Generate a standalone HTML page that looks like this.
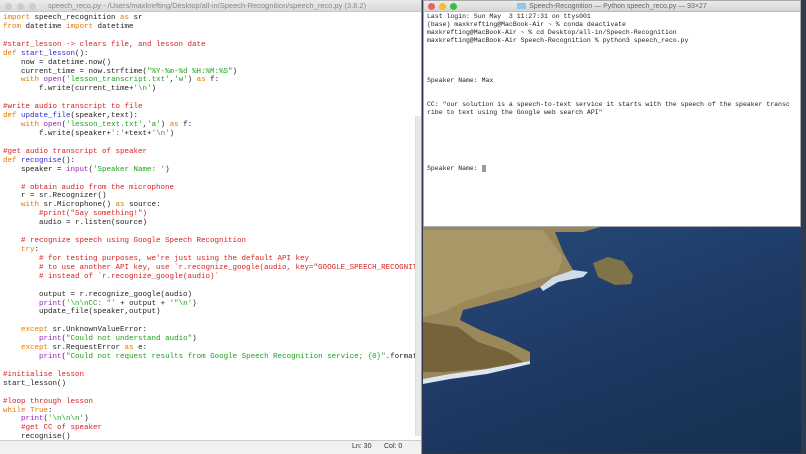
<!DOCTYPE html>
<html><head><meta charset="utf-8"><style>
*{margin:0;padding:0;box-sizing:border-box}
body{width:806px;height:454px;overflow:hidden;background:#2c3a4c;position:relative;font-family:"Liberation Mono",monospace}
#ed{position:absolute;left:0;top:0;width:422px;height:454px;background:#fff;border-right:1px solid #999}
#edt{height:12px;background:linear-gradient(#ececec,#d9d9d9);border-bottom:1px solid #c8c8c8;font-family:"Liberation Sans",sans-serif;font-size:7.5px;color:#888;line-height:12px;padding-left:48px;white-space:nowrap}
.dot{position:absolute;top:3px;width:7px;height:7px;border-radius:50%}
#code{position:absolute;left:3px;top:14px;font-size:7.5px;line-height:8.915px;white-space:pre;color:#222}
.k{color:#e07b00}.c{color:#d61f1f}.s{color:#1ba21b}.f{color:#2b2bd0}.b{color:#9a1fc0}
#sb{position:absolute;left:415px;top:116px;width:6px;height:320px;background:#e8e8e8;border-left:1px solid #ddd}
#st{position:absolute;left:0;top:440px;width:421px;height:14px;background:#f1f1f1;border-top:1px solid #ccc;font-family:"Liberation Sans",sans-serif;font-size:7px;color:#333;line-height:12px}
#term{position:absolute;left:423px;top:0;width:378px;height:227px;background:#fff;border:1px solid #aaa}
#tt{height:11px;background:linear-gradient(#ebebeb,#d6d6d6);border-bottom:1px solid #bbb;font-family:"Liberation Sans",sans-serif;font-size:7px;color:#666;text-align:center;line-height:11px}
#tx{position:absolute;left:3px;top:12px;font-size:6.5px;line-height:8px;white-space:pre;color:#222}
#wall{position:absolute;left:423px;top:227px;width:378px;height:226px;background:linear-gradient(160deg,#284b7c,#1d3862 55%,#16304f)}
</style></head><body>
<div id="ed">
<div id="edt">speech_reco.py - /Users/maxkrefting/Desktop/all-in/Speech-Recognition/speech_reco.py (3.8.2)</div>
<div class="dot" style="left:5px;background:#ccc"></div><div class="dot" style="left:17px;background:#ccc"></div><div class="dot" style="left:29px;background:#ccc"></div>
<div id="code"><span class="k">import</span> speech_recognition <span class="k">as</span> sr
<span class="k">from</span> datetime <span class="k">import</span> datetime

<span class="c">#start_lesson -&gt; clears file, and lesson date</span>
<span class="k">def</span> <span class="f">start_lesson</span>():
    now = datetime.now()
    current_time = now.strftime(<span class="s">"%Y-%m-%d %H:%M:%S"</span>)
    <span class="k">with</span> <span class="b">open</span>(<span class="s">'lesson_transcript.txt'</span>,<span class="s">'w'</span>) <span class="k">as</span> f:
        f.write(current_time+<span class="s">'\n'</span>)

<span class="c">#write audio transcript to file</span>
<span class="k">def</span> <span class="f">update_file</span>(speaker,text):
    <span class="k">with</span> <span class="b">open</span>(<span class="s">'lesson_text.txt'</span>,<span class="s">'a'</span>) <span class="k">as</span> f:
        f.write(speaker+<span class="s">':'</span>+text+<span class="s">'\n'</span>)

<span class="c">#get audio transcript of speaker</span>
<span class="k">def</span> <span class="f">recognise</span>():
    speaker = <span class="b">input</span>(<span class="s">'Speaker Name: '</span>)

    <span class="c"># obtain audio from the microphone</span>
    r = sr.Recognizer()
    <span class="k">with</span> sr.Microphone() <span class="k">as</span> source:
        <span class="c">#print("Say something!")</span>
        audio = r.listen(source)

    <span class="c"># recognize speech using Google Speech Recognition</span>
    <span class="k">try</span>:
        <span class="c"># for testing purposes, we're just using the default API key</span>
        <span class="c"># to use another API key, use `r.recognize_google(audio, key="GOOGLE_SPEECH_RECOGNIT</span>
        <span class="c"># instead of `r.recognize_google(audio)`</span>

        output = r.recognize_google(audio)
        <span class="b">print</span>(<span class="s">'\n\nCC: "'</span> + output + <span class="s">'"\n'</span>)
        update_file(speaker,output)

    <span class="k">except</span> sr.UnknownValueError:
        <span class="b">print</span>(<span class="s">"Could not understand audio"</span>)
    <span class="k">except</span> sr.RequestError <span class="k">as</span> e:
        <span class="b">print</span>(<span class="s">"Could not request results from Google Speech Recognition service; {0}"</span>.format

<span class="c">#initialise lesson</span>
start_lesson()

<span class="c">#loop through lesson</span>
<span class="k">while</span> <span class="k">True</span>:
    <span class="b">print</span>(<span class="s">'\n\n\n'</span>)
    <span class="c">#get CC of speaker</span>
    recognise()</div>
<div id="sb"></div>
<div id="st"><span style="position:absolute;left:352px">Ln: 30</span><span style="position:absolute;left:384px">Col: 0</span></div>
</div>
<div id="term">
<div id="tt"><span style="display:inline-block;width:9px;height:6px;background:#8ec5ea;margin-right:3px;vertical-align:-1px"></span>Speech-Recognition — Python speech_reco.py — 93×27</div>
<div class="dot" style="left:4px;top:2px;background:#f25d55"></div><div class="dot" style="left:15px;top:2px;background:#f6bd2f"></div><div class="dot" style="left:26px;top:2px;background:#2fc446"></div>
<div id="tx">Last login: Sun May  3 11:27:31 on ttys001
(base) maxkrefting@MacBook-Air ~ % conda deactivate
maxkrefting@MacBook-Air ~ % cd Desktop/all-in/Speech-Recognition
maxkrefting@MacBook-Air Speech-Recognition % python3 speech_reco.py




Speaker Name: Max


CC: "our solution is a speech-to-text service it starts with the speech of the speaker transc
ribe to text using the Google web search API"






Speaker Name: <span style="background:#999">&nbsp;</span></div>
</div>
<div id="wall">
<svg width="378" height="226" viewBox="0 0 378 226" style="position:absolute;left:0;top:0">
<path d="M0 0 L177 0 L160 5 L132 5 L140 25 L150 43 L130 50 L117 60 L90 70 L60 78 L40 83 L37 93 L57 103 L80 112 L107 125 L107 136 L85 142 L64 145 L27 150 L0 155 Z" fill="#9a875a"/>
<path d="M0 3 L120 3 L140 30 L135 45 L110 55 L70 65 L40 75 L20 85 L0 90 Z" fill="#b3a170" opacity=".6"/>
<path d="M0 95 L35 100 L55 115 L85 125 L100 135 L60 142 L20 145 L0 145 Z" fill="#6a5532" opacity=".75"/>
<path d="M0 152 L27 147 L64 142 L107 134 L107 137 L64 147 L27 152 L0 157 Z" fill="#dce6ee"/>
<path d="M117 60 L130 50 L150 43 L165 45 L160 50 L135 55 L120 64 Z" fill="#cfdbe5"/>
<path d="M170 36 L185 30 L200 34 L210 48 L208 57 L192 58 L175 50 Z" fill="#7f7448"/>
</svg>
</div>
<div style="position:absolute;left:801px;top:0;width:5px;height:454px;background:#2d3b4d"></div>
</body></html>
